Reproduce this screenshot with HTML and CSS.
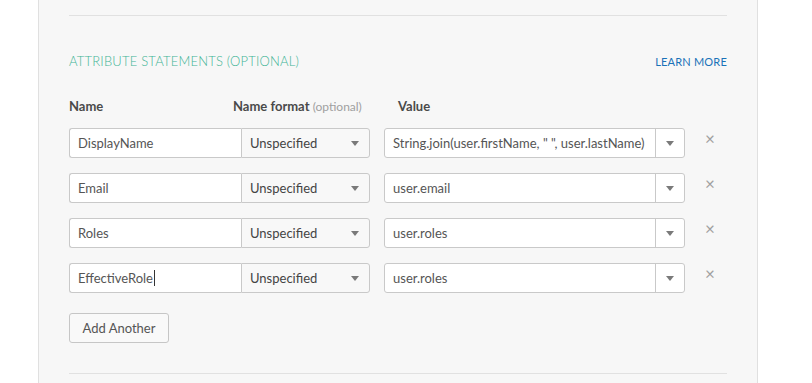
FILE: index.html
```html
<!DOCTYPE html>
<html lang="en">
<head>
    <meta charset="UTF-8">
    <meta name="viewport" content="width=device-width, initial-scale=1.0">
    <title>Attribute Statements</title>
    <link rel="stylesheet" href="styles.css">
</head>
<body>
<div class="panel">
    <div class="rule"></div>

    <div class="section-head">
        <h3 class="title">ATTRIBUTE STATEMENTS (OPTIONAL)</h3>
        <a href="#" class="learn">LEARN MORE</a>
    </div>

    <div class="labels">
        <span class="lbl-name">Name</span>
        <span class="lbl-format">Name format <em>(optional)</em></span>
        <span class="lbl-value">Value</span>
    </div>

    <div class="row">
        <div class="name-input">DisplayName</div>
        <div class="select">Unspecified<span class="arrow"></span></div>
        <div class="combo">
            <div class="combo-text">String.join(user.firstName, " ", user.lastName)</div>
            <div class="combo-btn"><span class="arrow"></span></div>
        </div>
        <span class="remove">&times;</span>
    </div>
    <div class="row">
        <div class="name-input">Email</div>
        <div class="select">Unspecified<span class="arrow"></span></div>
        <div class="combo">
            <div class="combo-text">user.email</div>
            <div class="combo-btn"><span class="arrow"></span></div>
        </div>
        <span class="remove">&times;</span>
    </div>
    <div class="row">
        <div class="name-input">Roles</div>
        <div class="select">Unspecified<span class="arrow"></span></div>
        <div class="combo">
            <div class="combo-text">user.roles</div>
            <div class="combo-btn"><span class="arrow"></span></div>
        </div>
        <span class="remove">&times;</span>
    </div>
    <div class="row">
        <div class="name-input">EffectiveRole<span class="caret"></span></div>
        <div class="select">Unspecified<span class="arrow"></span></div>
        <div class="combo">
            <div class="combo-text">user.roles</div>
            <div class="combo-btn"><span class="arrow"></span></div>
        </div>
        <span class="remove">&times;</span>
    </div>

    <button class="add-btn">Add Another</button>

    <div class="rule"></div>
</div>
</body>
</html>
```

FILE: styles.css
```css
body {
    margin: 0;
    background: #fff;
    font-family: Lato, "Open Sans", Arial, sans-serif;
    color: #555;
}

/* main panel */
.panel {
    width: 658px;
    margin-left: 38px;
    padding: 15px 30px 20px 30px;
    background: #f7f7f7;
    border-left: 1px solid #e0e0e0;
    border-right: 1px solid #e0e0e0;
}
.rule {
    height: 1px;
    background: #e1e1e1;
}

/* header */
.section-head {
    display: flex;
    justify-content: space-between;
    align-items: center;
    margin-top: 35px;
    height: 20px;
}
.title {
    margin: 0;
    font-size: 13px;
    font-weight: 300;
    color: #3fb496;
    letter-spacing: 0.2px;
}
.learn {
    font-size: 11px;
    color: #1a72b8;
    text-decoration: none;
    letter-spacing: 0.2px;
}

/* column labels */
.labels {
    display: flex;
    margin-top: 25px;
    height: 20px;
    align-items: center;
    font-size: 13px;
    font-weight: 700;
    color: #4a4a4a;
}
.lbl-name {
    width: 164px;
}
.lbl-format {
    width: 165px;
}
.lbl-format em {
    font-style: normal;
    font-weight: 400;
    color: #a0a0a0;
    font-size: 12px;
}

/* rows */
.row {
    display: flex;
    align-items: center;
    height: 30px;
    margin-top: 15px;
    font-size: 13px;
}
.labels + .row {
    margin-top: 12px;
}
.name-input {
    width: 163px;
    height: 28px;
    line-height: 28px;
    padding-left: 8px;
    background: #fff;
    border: 1px solid #c9c9c9;
    border-right: none;
    border-radius: 3px 0 0 3px;
    display: flex;
    align-items: center;
}
.caret {
    width: 1px;
    height: 16px;
    background: #333;
    margin-left: 1px;
}
.select {
    position: relative;
    width: 119px;
    height: 28px;
    line-height: 28px;
    padding-left: 8px;
    background: #f8f8f8;
    border: 1px solid #c9c9c9;
    border-radius: 0 3px 3px 0;
    color: #444;
}
.arrow {
    position: absolute;
    top: 12px;
    right: 10px;
    border-left: 4px solid transparent;
    border-right: 4px solid transparent;
    border-top: 5px solid #7a7a7a;
}
.combo {
    display: flex;
    width: 299px;
    height: 28px;
    margin-left: 14px;
    background: #fff;
    border: 1px solid #c9c9c9;
    border-radius: 3px;
}
.combo-text {
    flex: 1;
    line-height: 28px;
    padding-left: 8px;
    color: #555;
}
.combo-btn {
    position: relative;
    width: 28px;
    border-left: 1px solid #c9c9c9;
}
.combo-btn .arrow {
    right: 10px;
}
.remove {
    margin-left: 20px;
    margin-top: -10px;
    font-size: 17px;
    color: #a0a0a0;
}

/* add button */
.add-btn {
    display: block;
    margin: 20px 0 30px 0;
    width: 100px;
    height: 30px;
    font-family: inherit;
    font-size: 13px;
    color: #555;
    background: #f9f9f9;
    border: 1px solid #c6c6c6;
    border-radius: 3px;
}
```
